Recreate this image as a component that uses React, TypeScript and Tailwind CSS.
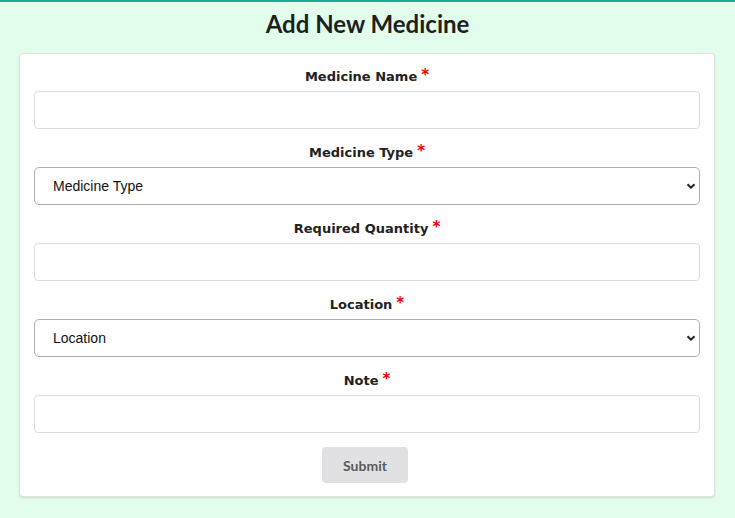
import { type ReactNode } from 'react';

function Label({ children }: { children: ReactNode }) {
    return (
        <label className="flex justify-center items-start h-[21px] pt-[2px] mb-[5px] text-[13px] font-bold text-[#222] font-['DejaVu_Sans',sans-serif] leading-[19px]">
            {children}
            <span className="text-[#e00] text-[15px] leading-[15px] mt-[1px] ml-[4px]">*</span>
        </label>
    );
}

function Chevron() {
    return (
        <svg className="pointer-events-none absolute right-[4px] top-1/2 -translate-y-1/2" width="10" height="8" viewBox="0 0 10 8">
            <path d="M1.5 2.2 L5 5.6 L8.5 2.2" fill="none" stroke="#222" strokeWidth="2" />
        </svg>
    );
}

function TextField() {
    return <input type="text" className="block w-full h-[38px] rounded-[4px] border border-[#dcdcdc] bg-white px-3 outline-none" />;
}

function SelectField({ placeholder }: { placeholder: string }) {
    return (
        <div className="relative">
            <select className="block w-full h-[38px] appearance-none rounded-[5px] border border-[#b0b0b0] bg-white pl-[18px] text-[14px] text-[#111] font-['Liberation_Sans',Arial,sans-serif] outline-none">
                <option>{placeholder}</option>
            </select>
            <Chevron />
        </div>
    );
}

export default function App() {
    const fields: { label: string; kind: 'text' | 'select' }[] = [
        { label: 'Medicine Name', kind: 'text' },
        { label: 'Medicine Type', kind: 'select' },
        { label: 'Required Quantity', kind: 'text' },
        { label: 'Location', kind: 'select' },
        { label: 'Note', kind: 'text' },
    ];

    return (
        <div className="min-h-[518px] bg-[#e2fdeb] border-t-2 border-t-[#1aab8f] font-['Lato',sans-serif]">
            <h1 className="text-center text-[24px] font-bold text-[#1e1e1e] leading-[30px] pt-[7px] pb-[14px]">Add New Medicine</h1>
            <form className="ml-[19px] mr-[20px] bg-white rounded-[4px] border border-[#e2e2e2] shadow-[0_1px_2px_rgba(0,0,0,0.12)] px-[14px] pt-[11px] pb-[13px]">
                {fields.map((f, i) => (
                    <div key={f.label} className={i === fields.length - 1 ? 'mb-[14px]' : 'mb-[12px]'}>
                        <Label>{f.label}</Label>
                        {f.kind === 'text' ? <TextField /> : <SelectField placeholder={f.label} />}
                    </div>
                ))}
                <div className="flex justify-center pr-[4px]">
                    <button type="button" className="w-[86px] h-[36px] rounded-[4px] bg-[#e1e1e3] text-[14px] font-bold text-[#5a5a5a]">
                        Submit
                    </button>
                </div>
            </form>
        </div>
    );
}
